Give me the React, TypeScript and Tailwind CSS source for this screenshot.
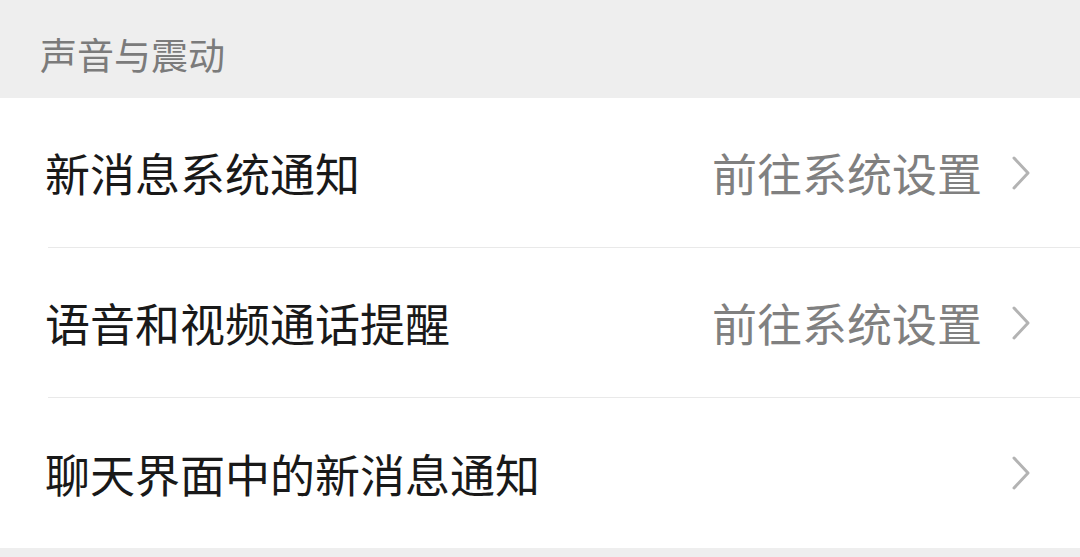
const font = { fontFamily: '"Noto Sans CJK SC", "Noto Sans", sans-serif' };

type Row = { title: string; value?: string };

const rows: Row[] = [
  { title: "新消息系统通知", value: "前往系统设置" },
  { title: "语音和视频通话提醒", value: "前往系统设置" },
  { title: "聊天界面中的新消息通知" },
];

function Chevron() {
  return (
    <svg width="22" height="36" viewBox="0 0 22 36" fill="none" className="shrink-0">
      <path d="M4 3 L18 18 L4 33" stroke="#b3b3b3" strokeWidth="3" strokeLinecap="round" strokeLinejoin="round" />
    </svg>
  );
}

export default function App() {
  return (
    <div className="w-[1080px] h-[557px] bg-[#eeeeee] overflow-hidden" style={font}>
      {/* Section header */}
      <div className="h-[98px] flex items-center pl-[40px] pt-[10px] text-[37px] text-[#7b7b7b] leading-none">
        声音与震动
      </div>

      {/* Rows */}
      <div className="bg-white">
        {rows.map((row, i) => (
          <div key={row.title} className="pl-[48px]">
            <div
              className={`h-[150px] flex items-center pr-[48px] ${
                i < rows.length - 1 ? "border-b border-[#e9e9e9]" : ""
              }`}
            >
              <span className="-ml-[3px] text-[45px] text-[#191919] leading-none flex-1">{row.title}</span>
              {row.value && (
                <span className="text-[45px] text-[#808080] leading-none mr-[28px]">{row.value}</span>
              )}
              <Chevron />
            </div>
          </div>
        ))}
      </div>
    </div>
  );
}
